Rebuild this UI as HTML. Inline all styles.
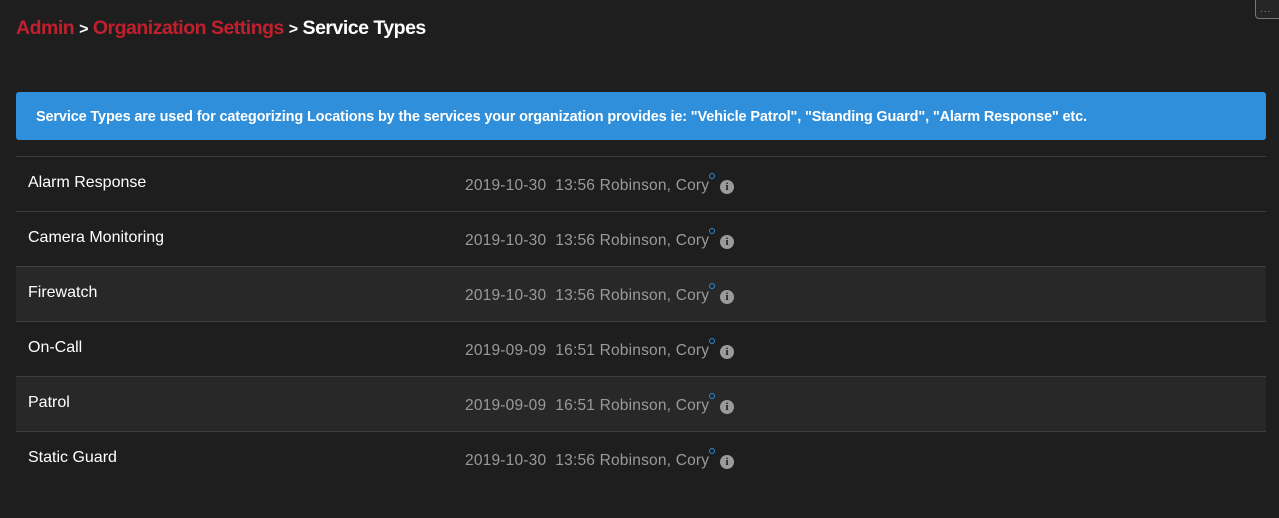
<!DOCTYPE html>
<html><head><style>
body{margin:0;background:#1e1e1e;width:1279px;height:518px;overflow:hidden;font-family:"Liberation Sans",sans-serif;position:relative}
.bc{position:absolute;left:16px;top:17px;font-size:19.5px;font-weight:bold;color:#fff;letter-spacing:-0.5px}
.bc .r{color:#c0202e}
.bc .g{font-size:16px}
.more{position:absolute;left:1255px;top:0;width:30px;height:19px;border:1px solid #777;border-top:none;border-radius:0 0 0 4px;background:#262626;color:#888;font-size:10px;line-height:20px;padding-left:4px;box-sizing:border-box;letter-spacing:1px}
.info{position:absolute;left:16px;top:92px;width:1250px;height:48px;background:#2f8fdb;border-radius:3px;color:#fff;font-size:14.5px;font-weight:bold;line-height:50px;padding-left:20px;box-sizing:border-box;letter-spacing:-0.15px;white-space:nowrap}
.tbl{position:absolute;left:16px;top:156px;width:1250px;border-top:1px solid #3e3e3e}
.row{height:54px;border-bottom:1px solid #3e3e3e;position:relative;color:#fff;font-size:16px}
.row.alt{background:#282828}
.row .n{position:absolute;left:12px;top:17px;letter-spacing:0px}
.row .m{position:absolute;left:449px;top:20px;color:#9a9a9a;font-size:15.5px;letter-spacing:0.2px;white-space:pre}
.dot{position:absolute;left:693px;top:16px;width:4px;height:4px;border:1px solid #2b8ad6;border-radius:50%}
.i{position:absolute;left:704px;top:23px;width:14px;height:14px;border-radius:50%;background:#9a9a9a;color:#1e1e1e;font-size:11px;font-weight:bold;text-align:center;line-height:14px;font-family:"Liberation Serif",serif}
</style></head><body>
<div class="bc"><span class="r">Admin</span> <span class="g">&gt;</span> <span class="r">Organization Settings</span> <span class="g">&gt;</span> Service Types</div>
<div class="more">...</div>
<div class="info">Service Types are used for categorizing Locations by the services your organization provides ie: "Vehicle Patrol", "Standing Guard", "Alarm Response" etc.</div>
<div class="tbl">
<div class="row"><span class="n">Alarm Response</span><span class="m">2019-10-30  13:56 Robinson, Cory</span><span class="dot"></span><span class="i">i</span></div>
<div class="row"><span class="n">Camera Monitoring</span><span class="m">2019-10-30  13:56 Robinson, Cory</span><span class="dot"></span><span class="i">i</span></div>
<div class="row alt"><span class="n">Firewatch</span><span class="m">2019-10-30  13:56 Robinson, Cory</span><span class="dot"></span><span class="i">i</span></div>
<div class="row"><span class="n">On-Call</span><span class="m">2019-09-09  16:51 Robinson, Cory</span><span class="dot"></span><span class="i">i</span></div>
<div class="row alt"><span class="n">Patrol</span><span class="m">2019-09-09  16:51 Robinson, Cory</span><span class="dot"></span><span class="i">i</span></div>
<div class="row" style="border-bottom:none"><span class="n">Static Guard</span><span class="m">2019-10-30  13:56 Robinson, Cory</span><span class="dot"></span><span class="i">i</span></div>
</div>
</body></html>
